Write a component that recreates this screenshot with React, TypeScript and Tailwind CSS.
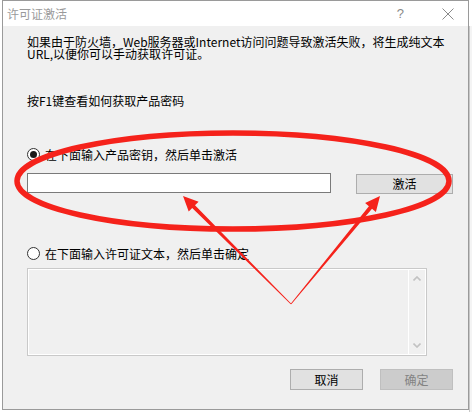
import React from 'react';

const font = { fontFamily: '"Noto Sans CJK SC", "Liberation Sans", sans-serif' };

// tapered arrow: thin tail, thick near head, filled triangular head
function arrowPoints(tx: number, ty: number, hx: number, hy: number) {
  const dx = hx - tx;
  const dy = hy - ty;
  const len = Math.hypot(dx, dy);
  const ux = dx / len;
  const uy = dy / len;
  const nx = -uy;
  const ny = ux;
  const bx = hx - ux * 15;
  const by = hy - uy * 15;
  const p = (x: number, y: number) => `${x.toFixed(1)},${y.toFixed(1)}`;
  return [
    p(tx + nx * 0.4, ty + ny * 0.4),
    p(bx + nx * 2, by + ny * 2),
    p(bx + nx * 7, by + ny * 7),
    p(hx, hy),
    p(bx - nx * 7, by - ny * 7),
    p(bx - nx * 2, by - ny * 2),
    p(tx - nx * 0.4, ty - ny * 0.4),
  ].join(' ');
}

const Radio: React.FC<{ checked?: boolean }> = ({ checked }) => (
  <span className="w-[13px] h-[13px] rounded-full border border-[#333333] bg-white flex items-center justify-center shrink-0">
    {checked && <span className="w-[7px] h-[7px] rounded-full bg-[#1a1a1a]" />}
  </span>
);

const App: React.FC = () => {
  return (
    <div className="w-[472px] h-[412px] bg-white relative overflow-hidden text-[12px] text-black" style={font}>
      {/* Dialog */}
      <div className="ml-[2px] w-[467px] h-[410px] border border-[#9a9a9a] bg-[#f0f0f0] flex flex-col">
        {/* Title bar */}
        <div className="h-[25px] bg-white flex items-center pl-[4px] pr-[14px] shrink-0">
          <span className="text-[#9a9a9a] text-[12px] leading-none">许可证激活</span>
          <span className="ml-auto text-[#8a8a8a] text-[13px] leading-none mr-[38px]" style={{ fontFamily: '"Liberation Sans", sans-serif' }}>?</span>
          <svg width="12" height="12" viewBox="0 0 12 12" className="shrink-0">
            <path d="M0.5 0.5 L11.5 11.5 M11.5 0.5 L0.5 11.5" stroke="#8a8a8a" strokeWidth="1" fill="none" />
          </svg>
        </div>

        {/* Body */}
        <div className="pl-[24px] pr-[15px] flex flex-col">
          <div className="mt-[10px] flex flex-col whitespace-nowrap">
            <div className="h-[12px] leading-[12px]">如果由于防火墙，Web服务器或Internet访问问题导致激活失败，将生成纯文本</div>
            <div className="h-[12px] leading-[12px]">URL,以便你可以手动获取许可证。</div>
          </div>

          <p className="mt-[35px] leading-[12px]">按F1键查看如何获取产品密码</p>

          <div className="mt-[41px] h-[13px] flex items-center gap-[5px]">
            <Radio checked />
            <span className="leading-[12px]">在下面输入产品密钥，然后单击激活</span>
          </div>

          <div className="mt-[12px] h-[21px] flex items-start">
            <div className="w-[304px] h-[20px] border border-[#7a7a7a] bg-white" />
            <button className="ml-auto mt-[1px] w-[97px] h-[20px] border border-[#adadad] bg-[#e1e1e1] flex items-center justify-center leading-none">
              激活
            </button>
          </div>

          <div className="mt-[53px] h-[13px] flex items-center gap-[5px]">
            <Radio />
            <span className="leading-[12px]">在下面输入许可证文本，然后单击确定</span>
          </div>

          <div className="mt-[8px] w-[400px] h-[88px] border border-[#c9c9c9] flex">
            <div className="flex-1 border border-white border-r-0" />
            <div className="w-[18px] border-l border-white border-r border-t border-b flex flex-col items-center justify-between py-[6px]">
              <svg width="8" height="5" viewBox="0 0 8 5">
                <path d="M0.5 4.5 L4 1 L7.5 4.5" stroke="#c2c2c2" strokeWidth="1.6" fill="none" />
              </svg>
              <svg width="8" height="5" viewBox="0 0 8 5">
                <path d="M0.5 0.5 L4 4 L7.5 0.5" stroke="#c2c2c2" strokeWidth="1.6" fill="none" />
              </svg>
            </div>
          </div>

          <div className="mt-[13px] flex justify-end gap-[17px]">
            <button className="w-[73px] h-[21px] border border-[#adadad] bg-[#e1e1e1] flex items-center justify-center leading-none">
              取消
            </button>
            <button className="w-[73px] h-[21px] border border-[#bfbfbf] bg-[#cccccc] text-[#838383] flex items-center justify-center leading-none">
              确定
            </button>
          </div>
        </div>
      </div>

      {/* Right edge of desktop behind */}
      <div className="absolute right-0 top-[26px] w-[3px] h-[386px] bg-[#f4f4f4] border-l border-[#c8c8c8]" />

      {/* Red annotation overlay */}
      <svg className="absolute left-0 top-0 pointer-events-none" width="472" height="412" viewBox="0 0 472 412">
        <ellipse cx="233" cy="181" rx="216" ry="48" stroke="#f5221b" strokeWidth="5.5" fill="none" />
        <polygon points={arrowPoints(291, 304, 183, 196)} fill="#f5221b" />
        <polygon points={arrowPoints(291, 304, 380, 196)} fill="#f5221b" />
      </svg>
    </div>
  );
};

export default App;
